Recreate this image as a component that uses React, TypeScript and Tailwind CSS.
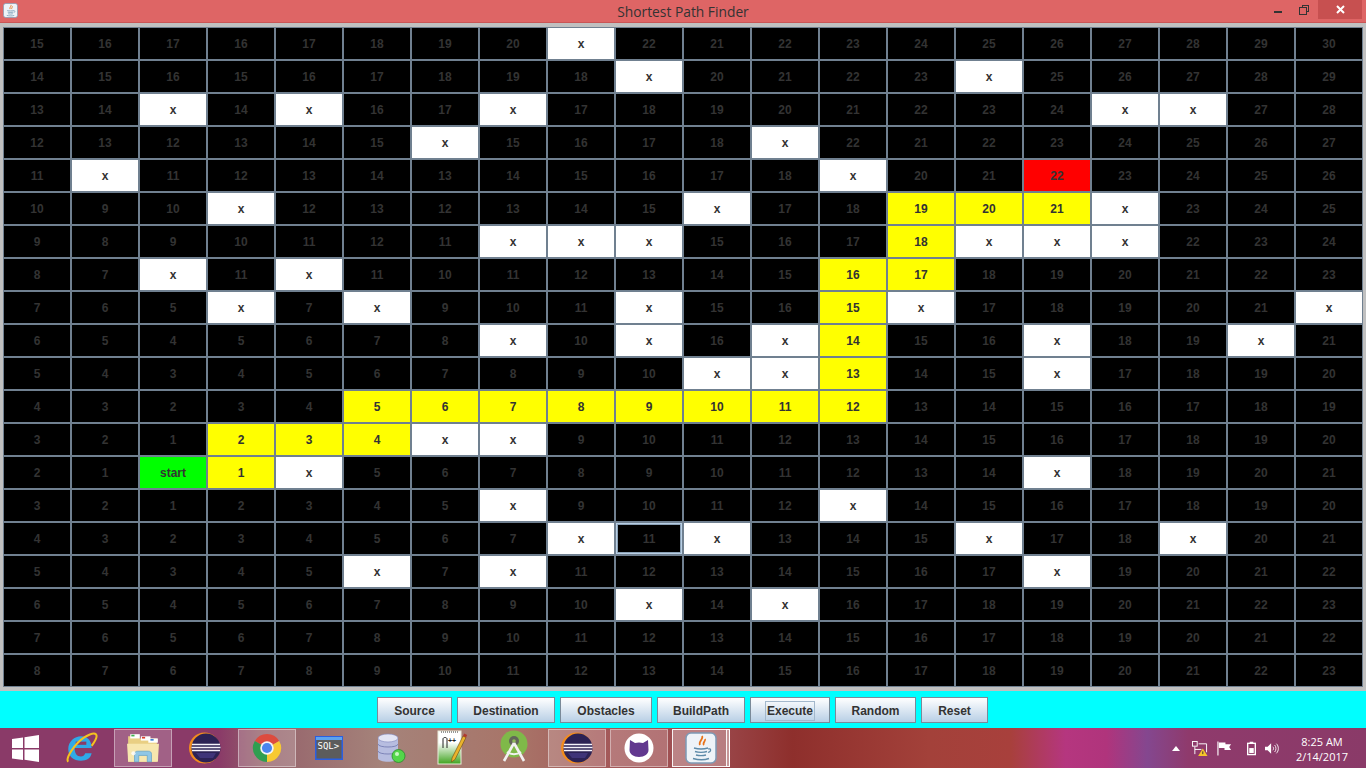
import React from 'react';

// s = start, r = target, f = focused, yN = path cell
const ROWS = [
  '15 16 17 16 17 18 19 20 x 22 21 22 23 24 25 26 27 28 29 30',
  '14 15 16 15 16 17 18 19 18 x 20 21 22 23 x 25 26 27 28 29',
  '13 14 x 14 x 16 17 x 17 18 19 20 21 22 23 24 x x 27 28',
  '12 13 12 13 14 15 x 15 16 17 18 x 22 21 22 23 24 25 26 27',
  '11 x 11 12 13 14 13 14 15 16 17 18 x 20 21 r22 23 24 25 26',
  '10 9 10 x 12 13 12 13 14 15 x 17 18 y19 y20 y21 x 23 24 25',
  '9 8 9 10 11 12 11 x x x 15 16 17 y18 x x x 22 23 24',
  '8 7 x 11 x 11 10 11 12 13 14 15 y16 y17 18 19 20 21 22 23',
  '7 6 5 x 7 x 9 10 11 x 15 16 y15 x 17 18 19 20 21 x',
  '6 5 4 5 6 7 8 x 10 x 16 x y14 15 16 x 18 19 x 21',
  '5 4 3 4 5 6 7 8 9 10 x x y13 14 15 x 17 18 19 20',
  '4 3 2 3 4 y5 y6 y7 y8 y9 y10 y11 y12 13 14 15 16 17 18 19',
  '3 2 1 y2 y3 y4 x x 9 10 11 12 13 14 15 16 17 18 19 20',
  '2 1 s y1 x 5 6 7 8 9 10 11 12 13 14 x 18 19 20 21',
  '3 2 1 2 3 4 5 x 9 10 11 12 x 14 15 16 17 18 19 20',
  '4 3 2 3 4 5 6 7 x f11 x 13 14 15 x 17 18 x 20 21',
  '5 4 3 4 5 x 7 x 11 12 13 14 15 16 17 x 19 20 21 22',
  '6 5 4 5 6 7 8 9 10 x 14 x 16 17 18 19 20 21 22 23',
  '7 6 5 6 7 8 9 10 11 12 13 14 15 16 17 18 19 20 21 22',
  '8 7 6 7 8 9 10 11 12 13 14 15 16 17 18 19 20 21 22 23',
].map((r) => r.split(' '));

const BUTTONS = [
  { label: 'Source', width: 'w-[75px]' },
  { label: 'Destination', width: 'w-[98px]' },
  { label: 'Obstacles', width: 'w-[92px]' },
  { label: 'BuildPath', width: 'w-[88px]' },
  { label: 'Execute', width: 'w-[80px]', focused: true },
  { label: 'Random', width: 'w-[81px]' },
  { label: 'Reset', width: 'w-[67px]' },
];

const Cell: React.FC<{ value: string }> = ({ value }) => {
  const base = 'flex items-center justify-center border border-[#708090] pt-[1px] text-[12px] font-bold text-[#333333]';
  if (value === 'x') return <div className={`${base} bg-white`}>x</div>;
  if (value === 's') return <div className={`${base} bg-[#00ff00]`}>start</div>;
  if (value[0] === 'y') return <div className={`${base} bg-[#ffff00]`}>{value.slice(1)}</div>;
  if (value[0] === 'r') return <div className={`${base} bg-[#ff0000]`}>{value.slice(1)}</div>;
  if (value[0] === 'f') {
    return (
      <div className={`${base} bg-black shadow-[inset_0_0_0_1px_#b8cfe5,inset_0_0_0_2px_#8da3b8]`}>
        {value.slice(1)}
      </div>
    );
  }
  return <div className={`${base} bg-black`}>{value}</div>;
};

const JavaIcon: React.FC<{ size: number }> = ({ size }) => (
  <svg width={size} height={size} viewBox="0 0 32 32">
    <rect x="1" y="1" width="30" height="30" rx="5" fill="#eef3f8" stroke="#7d9ab5" strokeWidth="1.5" />
    <path d="M17 4c2 3-4 5-2 9M20 7c1 2-3 4-1 6" fill="none" stroke="#e8731a" strokeWidth="1.8" />
    <path d="M9 16c4 1.2 10 1.2 14 0M10 19.5c3 1 9 1 12 0M11 23c3 .8 7 .8 10 0M8 26.5c5 1.4 12 1.4 16 0" fill="none" stroke="#5d8aa8" strokeWidth="1.4" />
    <path d="M23 17c3-1 4 2 0 3.5" fill="none" stroke="#5d8aa8" strokeWidth="1.2" />
  </svg>
);

const EclipseIcon = () => (
  <svg width="32" height="32" viewBox="0 0 32 32">
    <circle cx="15.5" cy="16" r="15.5" fill="#f28c1e" />
    <circle cx="17" cy="16" r="14.5" fill="#2c2255" />
    <path d="M3 12.5h28M2.5 15.5h29M3 18.500h28" stroke="#f4f2fa" strokeWidth="1.5" />
    <path d="M7 21h20l-3 5H11z" fill="#3f3478" />
  </svg>
);

const IeIcon = () => (
  <svg width="34" height="34" viewBox="0 0 32 32">
    <path d="M8 16h18c0-7-4-11-10-11S4 10 4 17s5 11 12 11c5 0 9-2 10-7h-6c-1 2-2 3-4 3-4 0-6-3-6-8z" fill="#2fa9e8" />
    <rect x="11" y="10" width="10" height="3" fill="#8a3a68" />
    <path d="M4 29C1 26 10 12 19 6c5-3 9-5 11-3 2 2-1 7-4 11" fill="none" stroke="#f4c21f" strokeWidth="2" />
  </svg>
);

const FolderIcon = () => (
  <svg width="34" height="34" viewBox="0 0 32 32">
    <path d="M2 5h9l2 2h16v22H2z" fill="#e9cf83" />
    <rect x="4" y="3" width="9" height="4" fill="#fff" />
    <rect x="5" y="3.5" width="3" height="1.6" fill="#3fb34f" />
    <rect x="14" y="5" width="9" height="4" fill="#fff" />
    <rect x="15" y="5.5" width="3" height="1.6" fill="#d9412e" />
    <rect x="21" y="7" width="9" height="4" fill="#fff" />
    <rect x="23" y="7.5" width="3" height="1.6" fill="#3b82d6" />
    <path d="M1 12h30l-1 17H2z" fill="#f7e7ae" />
    <path d="M8 29v-7c0-2 1-3 3-3h10c2 0 3 1 3 3v7h-4v-6h-8v6z" fill="#8fc7e6" stroke="#5a9cc4" strokeWidth=".6" />
    <circle cx="7" cy="21" r="2" fill="#ffffff" opacity=".8" />
  </svg>
);

const ChromeIcon = () => (
  <svg width="30" height="30" viewBox="0 0 32 32">
    <path d="M16 16L3 8.5A15 15 0 0 1 29 8.5z" fill="#dd4b3e" />
    <path d="M16 16L29 8.5A15 15 0 0 1 16 31z" fill="#f7c932" />
    <path d="M16 16L16 31A15 15 0 0 1 3 8.5z" fill="#2f9e50" />
    <circle cx="16" cy="16" r="7.2" fill="#f4f4f4" />
    <circle cx="16" cy="16" r="5.4" fill="#4a85ee" />
  </svg>
);

const SqlIcon = () => (
  <svg width="28" height="24" viewBox="0 0 28 24">
    <rect x=".75" y=".75" width="26.500" height="22.500" fill="#5c5c5c" stroke="#2b5fe0" strokeWidth="1.5" />
    <rect x="1" y="1" width="26" height="3" fill="#5da3ee" />
    <text x="2.500" y="13" fill="#ffffff" fontSize="9" fontFamily="'DejaVu Sans Mono', monospace">SQL&gt;</text>
  </svg>
);

const DbIcon = () => (
  <svg width="32" height="32" viewBox="0 0 32 32">
    <path d="M3 6v20c0 5 20 5 20 0V6z" fill="#b7bde0" />
    <ellipse cx="13" cy="6" rx="10" ry="4" fill="#e3e5f4" stroke="#8188bd" strokeWidth=".6" />
    <path d="M3 12c0 4 20 4 20 0M3 19c0 4 20 4 20 0" fill="none" stroke="#7d84b8" strokeWidth="1" />
    <circle cx="23.5" cy="24" r="6.5" fill="#53d64a" stroke="#2b8a2b" strokeWidth=".8" />
    <circle cx="22" cy="22" r="2" fill="#c9f7c3" />
  </svg>
);

const NppIcon = () => (
  <svg width="32" height="36" viewBox="0 0 32 36">
    <defs>
      <linearGradient id="nppFill" x1="0" y1="0" x2="0" y2="1">
        <stop offset="0.35" stopColor="#ffffff" />
        <stop offset="1" stopColor="#3fa31f" />
      </linearGradient>
    </defs>
    <rect x="1" y="1" width="23" height="33" fill="url(#nppFill)" stroke="#e7ecd9" />
    <path d="M4 2h17" stroke="#777" strokeWidth="1.5" strokeDasharray="1 1" />
    <path d="M6 18V9c0-2 4-2 4 0v9" fill="none" stroke="#222" strokeWidth="1" />
    <text x="11" y="13" fill="#222" fontSize="7" fontWeight="bold" fontFamily="'Liberation Sans', sans-serif">++</text>
    <path d="M15 28l11-22 3 1.5-11 22-3.5 2.5z" fill="#eab32c" stroke="#6b4c12" strokeWidth=".6" />
    <path d="M26 6l1.2-2.5 3 1.5-1.2 2.5z" fill="#b03a2e" />
  </svg>
);

const AndroidIcon = () => (
  <svg width="32" height="36" viewBox="0 0 32 36">
    <circle cx="15" cy="14" r="13.5" fill="#7fb949" />
    <circle cx="15" cy="11" r="5" fill="#62665a" />
    <circle cx="15" cy="11" r="1.8" fill="#8fb95a" />
    <path d="M15 13L5 31M15 13l10 18" stroke="#f1f1f1" strokeWidth="2.6" />
    <path d="M8 22c4 3 10 3 14 0" fill="none" stroke="#f1f1f1" strokeWidth="2" />
  </svg>
);

const CatIcon = () => (
  <svg width="30" height="30" viewBox="0 0 30 30">
    <circle cx="15" cy="15" r="14.5" fill="#ffffff" />
    <path d="M6 7l5 3c2.6-.8 5.4-.8 8 0l5-3 .5 10c0 4-4 7-9.500 7S5.500 21 5.500 17z" fill="#62388f" />
  </svg>
);

const TrayIcons = () => (
  <div className="flex items-center">
    <svg width="8" height="5" viewBox="0 0 8 5" className="ml-[1172px]">
      <path d="M4 0l4 5H0z" fill="#ffffff" />
    </svg>
    <svg width="16" height="15" viewBox="0 0 17 16" className="ml-[12px]">
      <rect x=".5" y=".5" width="5" height="5" fill="none" stroke="#fff" />
      <path d="M3 6v8M3 9h7M7 3h8.500v9" fill="none" stroke="#fff" />
      <path d="M11.500 8l5 8h-10z" fill="#f6c52a" />
      <rect x="11" y="11" width="1" height="3" fill="#333" />
    </svg>
    <svg width="15" height="15" viewBox="0 0 16 15" className="ml-[9px]">
      <path d="M1 0v15" stroke="#fff" strokeWidth="1.200" />
      <path d="M2 1h7v2h6l-2 3 2 3H8V7H2z" fill="#fff" />
    </svg>
    <svg width="9" height="15" viewBox="0 0 10 15" className="ml-[15px]">
      <rect x=".75" y="1.750" width="8.500" height="12.500" fill="none" stroke="#fff" strokeWidth="1.500" />
      <rect x="3" y="0" width="4" height="2" fill="#fff" />
      <rect x="2.500" y="7" width="5" height="5.500" fill="#fff" />
    </svg>
    <svg width="14" height="13" viewBox="0 0 16 14" className="ml-[9px]">
      <path d="M0 5h3l4-4v12L3 9H0z" fill="#fff" />
      <path d="M9 5c1 1 1 3 0 4M11 3c2 2 2 6 0 8M13 1.500c3 3 3 8 0 11" fill="none" stroke="#fff" strokeWidth="1" />
    </svg>
  </div>
);

const TaskSlot: React.FC<{ highlight?: 'soft' | 'strong'; children: React.ReactNode }> = ({ highlight, children }) => {
  let cls = 'flex h-[38px] w-[58px] items-center justify-center';
  if (highlight === 'soft') cls += ' border border-white/40 bg-white/20';
  if (highlight === 'strong') cls += ' border border-white/90 bg-white/30';
  return <div className="flex w-[62px] items-center justify-center">{<div className={cls}>{children}</div>}</div>;
};

export default function App() {
  return (
    <div className="flex h-[768px] w-[1366px] flex-col overflow-hidden bg-[#c0c0c0] font-['Liberation_Sans',sans-serif]">
      {/* Title bar */}
      <div className="relative flex h-[23px] shrink-0 items-center justify-center border-b border-[#c95555] bg-[#de6565] pt-[1px]">
        <div className="absolute left-[3px] top-[3px] flex">
          <JavaIcon size={15} />
        </div>
        <span className="font-['Open_Sans',sans-serif] text-[13.8px] leading-none text-[#333333]">Shortest Path Finder</span>
        <div className="absolute right-[4px] top-0 flex h-[19px] items-center">
          <div className="mt-[5px] h-[2px] w-[8px] bg-[#333333]" />
          <div className="relative ml-[17px] h-[10px] w-[10px]">
            <div className="absolute right-0 top-0 h-[7px] w-[7px] border border-[#333333]" />
            <div className="absolute bottom-0 left-0 h-[8px] w-[8px] border border-[#333333] bg-[#de6565]" />
          </div>
          <div className="ml-[9px] flex h-[19px] w-[44px] items-center justify-center bg-[#c75050]">
            <svg width="9" height="9" viewBox="0 0 9 9">
              <path d="M1 1l7 7M8 1l-7 7" stroke="#ffffff" strokeWidth="2" />
            </svg>
          </div>
        </div>
      </div>

      {/* Grid */}
      <div className="shrink-0 pl-[3px] pt-[4px]">
        <div className="grid w-[1360px] grid-cols-[repeat(20,68px)] grid-rows-[repeat(20,33px)]">
          {ROWS.flat().map((value, i) => (
            <Cell key={i} value={value} />
          ))}
        </div>
      </div>

      {/* Buttons */}
      <div className="mt-[4px] flex h-[37px] shrink-0 items-center justify-center gap-[5px] bg-[#00ffff] pr-[1px] pt-[1px]">
        {BUTTONS.map((b) => (
          <div
            key={b.label}
            className={`flex h-[26px] items-center justify-center border border-[#7a8a99] bg-gradient-to-b from-white to-[#b8cfe5] pt-[1px] text-[12px] font-bold text-[#333333] ${b.width}`}
          >
            <span className={b.focused ? 'border border-[#a3b8cc] px-[1px]' : ''}>{b.label}</span>
          </div>
        ))}
      </div>

      {/* Taskbar */}
      <div className="relative flex h-[40px] shrink-0 items-center bg-[linear-gradient(90deg,#8a3a68_0%,#8a3a68_16%,#94606a_19%,#a5837a_28%,#a87468_38%,#a45a5a_44%,#9c4a4e_52%,#8e2f2c_58%,#a3413a_68%,#a8403c_74%,#b5367f_78%,#b0347c_81%,#84478f_84%,#8f3a6c_87%,#8a3a68_100%)]">
        <div className="flex w-[50px] justify-center">
          <svg width="27" height="27" viewBox="0 0 27 27">
            <path d="M0 4l11-1.500V13H0zM12.500 2.300L27 0v13H12.500zM0 14.500h11V25L0 23.500zM12.500 14.500H27V27l-14.500-2.200z" fill="#ffffff" />
          </svg>
        </div>
        <TaskSlot><IeIcon /></TaskSlot>
        <TaskSlot highlight="soft"><FolderIcon /></TaskSlot>
        <TaskSlot><EclipseIcon /></TaskSlot>
        <TaskSlot highlight="soft"><ChromeIcon /></TaskSlot>
        <TaskSlot><SqlIcon /></TaskSlot>
        <TaskSlot><DbIcon /></TaskSlot>
        <TaskSlot><NppIcon /></TaskSlot>
        <TaskSlot><AndroidIcon /></TaskSlot>
        <TaskSlot highlight="soft"><EclipseIcon /></TaskSlot>
        <TaskSlot highlight="soft"><CatIcon /></TaskSlot>
        <TaskSlot highlight="strong"><JavaIcon size={32} /></TaskSlot>
        <div className="absolute left-[726px] top-[1px] h-[38px] w-[4px] border border-white/90 bg-white/20" />
        <div className="absolute left-0 top-[13px]">
          <TrayIcons />
        </div>
        <div className="absolute left-[1290px] top-[6px] w-[64px] text-center font-['Open_Sans',sans-serif] text-[11px] leading-[15px] text-white">
          <div>8:25 AM</div>
          <div>2/14/2017</div>
        </div>
      </div>
    </div>
  );
}
